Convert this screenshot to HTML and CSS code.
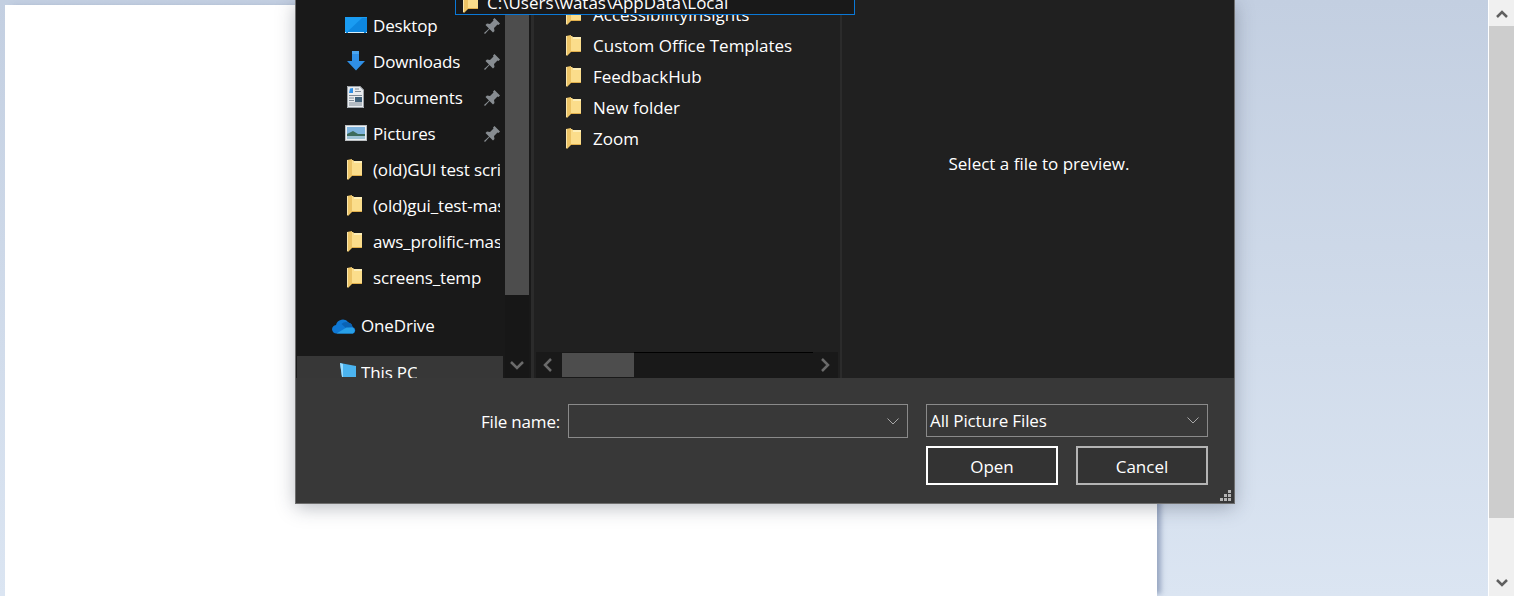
FILE: index.html
```html
<!DOCTYPE html>
<html lang="en">
<head>
    <meta charset="UTF-8">
    <meta name="viewport" content="width=device-width, initial-scale=1.0">
    <title>Open file</title>
    <link rel="stylesheet" href="styles.css">
</head>
<body>
    <svg class="defs" width="0" height="0">
        <symbol id="folder" viewBox="0 0 15 21">
            <path d="M5 1h1l1 1h8v15H5z" fill="#fbdd8b"/>
            <path d="M7 2h8v2H7z" fill="#fdeeb8"/>
            <path d="M0 1l5-1v17l-4 4-1-1z" fill="#ecc365"/>
            <path d="M0 1h1v19l-1 0z" fill="#f9e6ad"/>
            <path d="M5 16h10v1H5z" fill="#e2b04c"/>
        </symbol>
        <symbol id="pin" viewBox="0 0 16 16">
            <path d="M10.500 0L16 5.500 14.500 7l-1-.5L10 10l.5 3L9 14.500 5.500 11 1 16l-1-1 5-4.500L1.500 7 3 5.500l3 .5 3.500-3.500L9 1.500z" fill="#878c91"/>
        </symbol>
    </svg>

    <div class="page">
        <div class="canvas">
            <div class="sheet"></div>
        </div>
        <div class="page-scroll">
            <div class="page-arrow page-arrow-up"><svg width="12" height="8" viewBox="0 0 12 8"><path d="M1 7l5-5 5 5" fill="none" stroke="#606060" stroke-width="2.500"/></svg></div>
            <div class="page-thumb"></div>
            <div class="page-rest"></div>
            <div class="page-arrow"><svg width="12" height="8" viewBox="0 0 12 8"><path d="M1 1l5 5 5-5" fill="none" stroke="#606060" stroke-width="2.500"/></svg></div>
        </div>
    </div>

    <div class="dialog">
        <div class="browser">
            <div class="nav">
                <div class="nav-list">
                    <div class="nav-row">
                        <svg class="nav-icon" width="24" height="20" viewBox="0 0 24 20"><rect x="0" y="2" width="22" height="16" fill="#1a9cf2"/><path d="M2 17L17 3h5v15H2z" fill="#0d87e0"/><path d="M0 17.500h1M3 17.500h16M21 17.500h1" stroke="#d5eefc"/></svg>
                        <span class="nav-text">Desktop</span>
                        <svg class="pin" width="16" height="16"><use href="#pin"/></svg>
                    </div>
                    <div class="nav-row">
                        <svg class="nav-icon" width="24" height="22" viewBox="0 0 24 22"><path d="M7 0h7v10h6l-9 9.500L2 10h5z" fill="#2f8fe6"/><path d="M7 0h7v3H7z" fill="#4aa3ee"/></svg>
                        <span class="nav-text">Downloads</span>
                        <svg class="pin" width="16" height="16"><use href="#pin"/></svg>
                    </div>
                    <div class="nav-row">
                        <svg class="nav-icon nav-icon-doc" width="24" height="22" viewBox="0 0 24 22"><path d="M2 0h13l4 4v18H2z" fill="#e9ecef"/><path d="M2.500.500h12.300l3.700 3.700v17.300h-16z" fill="none" stroke="#9aa0a6"/><path d="M5 2.500L8 2v5H4z" fill="#2f8fe6"/><path d="M10 3h4M10 5.500h6M4 9.500h13M4 12h5M4 14.500h5M4 17h13M4 19h13" stroke="#7f8a96"/><path d="M10 11h7v5h-7z" fill="#3f6079"/></svg>
                        <span class="nav-text">Documents</span>
                        <svg class="pin" width="16" height="16"><use href="#pin"/></svg>
                    </div>
                    <div class="nav-row">
                        <svg class="nav-icon" width="24" height="18" viewBox="0 0 24 18"><rect x="0.500" y="2.500" width="21" height="15" fill="#eef1f3" stroke="#b9bdc0"/><path d="M2 4h18v7H2z" fill="#7fb4de"/><path d="M2 11l6-3 5 3h7v5H2z" fill="#3d6b5c"/><path d="M2 13h18v3H2z" fill="#9fc3d6"/></svg>
                        <span class="nav-text">Pictures</span>
                        <svg class="pin" width="16" height="16"><use href="#pin"/></svg>
                    </div>
                    <div class="nav-row">
                        <svg class="nav-icon nav-folder" width="15" height="21"><use href="#folder"/></svg>
                        <span class="nav-text">(old)GUI test scripts</span>
                    </div>
                    <div class="nav-row">
                        <svg class="nav-icon nav-folder" width="15" height="21"><use href="#folder"/></svg>
                        <span class="nav-text">(old)gui_test-master</span>
                    </div>
                    <div class="nav-row">
                        <svg class="nav-icon nav-folder" width="15" height="21"><use href="#folder"/></svg>
                        <span class="nav-text">aws_prolific-master</span>
                    </div>
                    <div class="nav-row">
                        <svg class="nav-icon nav-folder" width="15" height="21"><use href="#folder"/></svg>
                        <span class="nav-text">screens_temp</span>
                    </div>
                    <div class="nav-row nav-root">
                        <svg class="root-icon" width="25" height="17" viewBox="0 0 25 17"><path d="M4.500 16.500a4.200 4.200 0 0 1-.5-8.400A7 7 0 0 1 16.500 5.500a5.500 5.500 0 0 1 4 4.500 3.400 3.400 0 0 1 .5 6.500z" fill="#0f78d4"/><path d="M9.500 7A7 7 0 0 1 16.500 5.500a5.500 5.500 0 0 1 4 4.500l-6 1.500z" fill="#0a62b4"/><path d="M4.500 16.500l10-6 6 0a3.400 3.400 0 0 1 .5 6z" fill="#28a0e8"/></svg>
                        <span class="nav-text">OneDrive</span>
                    </div>
                    <div class="nav-row nav-selected">
                        <svg class="root-icon pc-icon" width="16" height="20" viewBox="0 0 16 20"><path d="M0 0l16 3v11H4l-2 0z" fill="#4bb4f0"/><path d="M0 0l3 1v13H2z" fill="#9adcff"/><path d="M0 15h10v2H0z" fill="#9aa0a6"/></svg>
                        <span class="nav-text">This PC</span>
                    </div>
                </div>
                <div class="nav-scroll">
                    <div class="nav-thumb"></div>
                    <div class="nav-arrow"><svg width="14" height="9" viewBox="0 0 14 9"><path d="M1 1l6 6 6-6" fill="none" stroke="#6b6b6b" stroke-width="2.500"/></svg></div>
                </div>
            </div>

            <div class="files">
                <div class="file-list">
                    <div class="file-row"><svg class="file-icon" width="15" height="21"><use href="#folder"/></svg>AccessibilityInsights</div>
                    <div class="file-row"><svg class="file-icon" width="15" height="21"><use href="#folder"/></svg>Custom Office Templates</div>
                    <div class="file-row"><svg class="file-icon" width="15" height="21"><use href="#folder"/></svg>FeedbackHub</div>
                    <div class="file-row"><svg class="file-icon" width="15" height="21"><use href="#folder"/></svg>New folder</div>
                    <div class="file-row"><svg class="file-icon" width="15" height="21"><use href="#folder"/></svg>Zoom</div>
                </div>
                <div class="h-scroll">
                    <div class="h-arrow h-arrow-left"><svg width="9" height="14" viewBox="0 0 9 14"><path d="M8 1L2 7l6 6" fill="none" stroke="#6b6b6b" stroke-width="2.500"/></svg></div>
                    <div class="h-thumb"></div>
                    <div class="h-track"></div>
                    <div class="h-arrow"><svg width="9" height="14" viewBox="0 0 9 14"><path d="M1 1l6 6-6 6" fill="none" stroke="#6b6b6b" stroke-width="2.500"/></svg></div>
                </div>
            </div>

            <div class="preview">Select a file to preview.</div>
        </div>

        <div class="footer">
            <div class="footer-line">
                <label class="name-label" for="fileName">File name:</label>
                <div class="combo name-combo">
                    <input class="combo-input" id="fileName" type="text">
                    <svg width="12" height="7" viewBox="0 0 12 7"><path d="M.5.500L6 6l5.500-5.500" fill="none" stroke="#a8a8a8"/></svg>
                </div>
                <div class="combo type-combo">
                    <span class="combo-text">All Picture Files</span>
                    <svg width="12" height="7" viewBox="0 0 12 7"><path d="M.5.500L6 6l5.500-5.500" fill="none" stroke="#a8a8a8"/></svg>
                </div>
            </div>
            <div class="footer-buttons">
                <button class="btn btn-default" type="button">Open</button>
                <button class="btn" type="button">Cancel</button>
            </div>
            <svg class="grip" width="11" height="11" viewBox="0 0 11 11"><path d="M8 0h3v3H8zM4 4h3v3H4zM8 4h3v3H8zM0 8h3v3H0zM4 8h3v3H4zM8 8h3v3H8z" fill="#b5b5b5"/></svg>
        </div>

        <div class="path-popup">
            <svg class="popup-icon" width="15" height="21"><use href="#folder"/></svg>
            <span>C:\Users\watas\AppData\Local</span>
        </div>
    </div>
</body>
</html>
```

FILE: styles.css
```css
html, body {
    height: 100%;
}

body {
    margin: 0;
    overflow: hidden;
    position: relative;
    font-family: "Open Sans", "Noto Sans", Arial, sans-serif;
    font-size: 17px;
    color: #fff;
}

.defs {
    position: absolute;
}

.page {
    display: flex;
    height: 100%;
}

.canvas {
    flex: 1;
    padding: 5px 0 0 5px;
    background: linear-gradient(180deg, #c3cfe1 0%, #dbe5f2 100%);
    overflow: hidden;
}

.sheet {
    width: 1152px;
    height: 100%;
    background: #fff;
    box-shadow: 6px 0 5px -2px rgba(90, 110, 150, 0.5);
}

.page-scroll {
    width: 25px;
    display: flex;
    flex-direction: column;
    margin-left: 1px;
    background: #f0f0f0;
}

.page-arrow {
    height: 26px;
    flex: none;
    display: flex;
    align-items: center;
    justify-content: center;
}

.page-arrow-up {
    box-sizing: border-box;
    padding-top: 2px;
}

.page-thumb {
    height: 492px;
    flex: none;
    background: #cdcdcd;
}

.page-rest {
    flex: 1;
}

/* dialog */
.dialog {
    position: absolute;
    left: 296px;
    top: 0;
    width: 938px;
    height: 503px;
    display: flex;
    flex-direction: column;
    background: #383838;
    box-shadow: 0 0 0 1px #6e6e6e, 0 4px 18px rgba(40, 50, 70, 0.35);
}

.browser {
    height: 378px;
    flex: none;
    display: flex;
    overflow: hidden;
    background: #202020;
}

.nav {
    width: 235px;
    flex: none;
    display: flex;
    background: #191919;
    border-right: 3px solid #2b2b2b;
}

.nav-list {
    width: 209px;
    flex: none;
    padding-top: 8px;
    overflow: hidden;
}

.nav-row {
    height: 36px;
    box-sizing: border-box;
    display: flex;
    align-items: center;
    padding: 0 5px 2px 49px;
    position: relative;
    white-space: nowrap;
}

.nav-text {
    overflow: hidden;
    min-width: 0;
    margin-left: 28px;
    max-width: 130px;
    letter-spacing: -0.15px;
}

.nav-icon {
    position: absolute;
    left: 49px;
    top: 7px;
}

.nav-icon-doc {
    top: 6px;
}

.nav-row .nav-folder {
    left: 51px;
}

.pin {
    position: absolute;
    left: 188px;
    top: 10px;
}

.nav-root {
    margin-top: 12px;
    padding-left: 37px;
}

.root-icon {
    position: absolute;
    left: 36px;
    top: 9px;
}

.nav-selected {
    margin: 12px 2px 0 1px;
    padding-left: 36px;
    padding-bottom: 4px;
    background: #373737;
}

.pc-icon {
    left: 43px;
    top: 7px;
}

.nav-scroll {
    width: 24px;
    flex: none;
    display: flex;
    flex-direction: column;
    background: #171717;
}

.nav-thumb {
    height: 295px;
    flex: none;
    background: #4d4d4d;
}

.nav-arrow {
    height: 24px;
    margin-top: 58px;
    display: flex;
    align-items: center;
    justify-content: center;
}

.files {
    width: 306px;
    flex: none;
    display: flex;
    flex-direction: column;
    border-right: 2px solid #2b2b2b;
}

.file-list {
    flex: 1;
    overflow: hidden;
    margin-top: -1px;
}

.file-row {
    height: 31px;
    display: flex;
    align-items: center;
    padding-left: 32px;
    white-space: nowrap;
}

.file-icon {
    margin-right: 12px;
    flex: none;
}

.h-scroll {
    height: 26px;
    flex: none;
    display: flex;
    margin: 0 2px;
    background: #191919;
}

.h-arrow {
    width: 25px;
    flex: none;
    display: flex;
    align-items: center;
    justify-content: center;
}

.h-arrow-left {
    width: 26px;
    box-sizing: border-box;
    padding-right: 3px;
}

.h-thumb {
    width: 72px;
    flex: none;
    margin: 1px 0;
    background: #4d4d4d;
}

.h-track {
    flex: 1;
    border-top: 1px solid #000;
}

.preview {
    flex: 1;
    padding: 150px 0 0 2px;
    text-align: center;
    line-height: 28px;
}

/* footer */
.footer {
    flex: 1;
    position: relative;
    padding: 26px 26px 0 0;
    background: #383838;
}

.footer-line {
    display: flex;
    align-items: flex-start;
    justify-content: flex-end;
}

.name-label {
    align-self: center;
    margin-right: 8px;
    letter-spacing: -0.2px;
}

.combo {
    display: flex;
    align-items: center;
    justify-content: space-between;
    padding: 0 8px 0 3px;
    border: 1px solid #8a8a8a;
}

.name-combo {
    width: 327px;
    height: 32px;
    margin-right: 18px;
}

.type-combo {
    width: 269px;
    height: 31px;
}

.combo-text {
    letter-spacing: -0.12px;
}

.combo-input {
    flex: 1;
    min-width: 0;
    border: none;
    background: transparent;
    outline: none;
}

.footer-buttons {
    display: flex;
    justify-content: flex-end;
    gap: 18px;
    margin-top: 8px;
}

.btn {
    width: 132px;
    height: 39px;
    padding: 2px 0 0;
    background: #333;
    color: #fff;
    border: 2px solid #b4b4b4;
    font: inherit;
}

.btn-default {
    border-color: #fff;
}

.grip {
    position: absolute;
    right: 3px;
    bottom: 2px;
}

.path-popup {
    position: absolute;
    left: 159px;
    top: -12px;
    width: 391px;
    height: 23px;
    display: flex;
    align-items: center;
    padding: 2px 0 0 7px;
    background: #191919;
    border: 1px solid #0a78d7;
    white-space: nowrap;
}

.popup-icon {
    margin-right: 9px;
    flex: none;
}
```
